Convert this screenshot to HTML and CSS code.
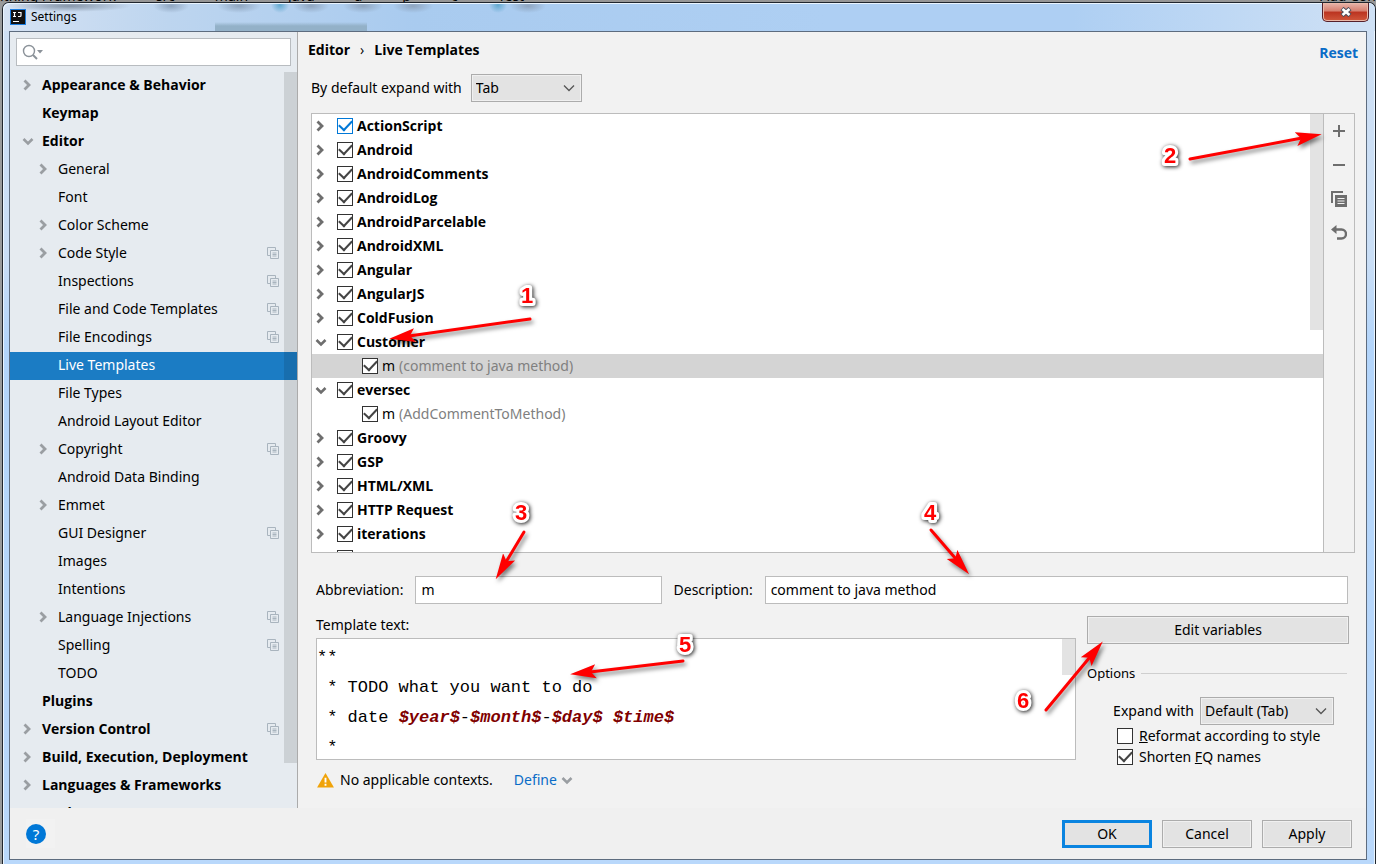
FILE: index.html
```html
<!DOCTYPE html>
<html lang="en">
<head>
<meta charset="utf-8">
<title>Settings</title>
<link rel="stylesheet" href="styles.css">
</head>
<body>
<svg class="sprite" aria-hidden="true">
  <symbol id="right" viewBox="0 0 12 12"><path d="M2.500 1.500 7 6l-4.500 4.500" fill="none" stroke="currentColor" stroke-width="2.800"/></symbol>
  <symbol id="down" viewBox="0 0 12 12"><path d="M1.500 4 6 8.500 10.500 4" fill="none" stroke="currentColor" stroke-width="2.600"/></symbol>
  <symbol id="thin" viewBox="0 0 12 12"><path d="M1 3.500 6 8.500l5-5" fill="none" stroke="currentColor" stroke-width="1.300"/></symbol>
  <symbol id="proj" viewBox="0 0 12 12"><path d="M8.500 3V.5h-8v8H3M3.500 3.500h8v8h-8zM5.500 6h4M5.500 7.500h4M5.500 9h4" fill="none" stroke="currentColor"/></symbol>
  <marker id="head" viewBox="0 0 26 16" markerWidth="26" markerHeight="16" refX="6" refY="8" orient="auto" markerUnits="userSpaceOnUse"><path d="M0 1 26 8 0 15 5 8z" fill="#f00"/></marker>
</svg>
<div class="desktop" aria-hidden="true"><span>ithing Framework</span><span>src</span><span>main</span><span>java</span><span>a</span><span>p</span><span>c</span><span>Test</span><span class="far">Add Con</span></div>
<div class="window">
  <header class="titlebar">
    <svg class="logo" viewBox="0 0 16 16"><rect width="16" height="16" fill="#1b7de0"/><rect x="1" y="1" width="14" height="14" fill="#111"/><path d="M3 3.500h3M4.500 3.500v4M3 7.500h3M8 3.500h3v3q0 1-1 1H8M3 12.500h6" fill="none" stroke="#fff" stroke-width="1.200"/></svg>
    <h1>Settings</h1>
    <button class="close" aria-label="Close"><svg viewBox="0 0 12 10"><path d="M2 1.500 10 8.500M10 1.500 2 8.500" stroke="#4b4f5c" stroke-width="4.500"/><path d="M2.500 2 9.500 8M9.500 2 2.500 8" stroke="#fff" stroke-width="2.600"/></svg></button>
  </header>
  <div class="client">
    <div class="body">
      <nav class="sidebar">
        <div class="search"><svg viewBox="0 0 22 16"><circle cx="7" cy="7" r="5.500" fill="none" stroke="#8b9299" stroke-width="1.400"/><path d="m11 11 4 4" stroke="#8b9299" stroke-width="2"/><path d="M15 6h6l-3 3.500z" fill="#8b9299"/></svg><input type="search" aria-label="Search settings"></div>
        <div class="treebox">
        <ul class="tree">
          <li class="top"><svg><use href="#right"/></svg><span>Appearance &amp; Behavior</span></li>
          <li class="top"><i></i><span>Keymap</span></li>
          <li class="top"><svg><use href="#down"/></svg><span>Editor</span></li>
          <li><svg><use href="#right"/></svg><span>General</span></li>
          <li><i></i><span>Font</span></li>
          <li><svg><use href="#right"/></svg><span>Color Scheme</span></li>
          <li><svg><use href="#right"/></svg><span>Code Style</span><svg class="proj"><use href="#proj"/></svg></li>
          <li><i></i><span>Inspections</span><svg class="proj"><use href="#proj"/></svg></li>
          <li><i></i><span>File and Code Templates</span><svg class="proj"><use href="#proj"/></svg></li>
          <li><i></i><span>File Encodings</span><svg class="proj"><use href="#proj"/></svg></li>
          <li class="selected"><i></i><span>Live Templates</span></li>
          <li><i></i><span>File Types</span></li>
          <li><i></i><span>Android Layout Editor</span></li>
          <li><svg><use href="#right"/></svg><span>Copyright</span><svg class="proj"><use href="#proj"/></svg></li>
          <li><i></i><span>Android Data Binding</span></li>
          <li><svg><use href="#right"/></svg><span>Emmet</span></li>
          <li><i></i><span>GUI Designer</span><svg class="proj"><use href="#proj"/></svg></li>
          <li><i></i><span>Images</span></li>
          <li><i></i><span>Intentions</span></li>
          <li><svg><use href="#right"/></svg><span>Language Injections</span><svg class="proj"><use href="#proj"/></svg></li>
          <li><i></i><span>Spelling</span><svg class="proj"><use href="#proj"/></svg></li>
          <li><i></i><span>TODO</span></li>
          <li class="top"><i></i><span>Plugins</span></li>
          <li class="top"><svg><use href="#right"/></svg><span>Version Control</span><svg class="proj"><use href="#proj"/></svg></li>
          <li class="top"><svg><use href="#right"/></svg><span>Build, Execution, Deployment</span></li>
          <li class="top"><svg><use href="#right"/></svg><span>Languages &amp; Frameworks</span></li>
          <li class="top"><i></i><span>Tools</span></li>
        </ul>
        <div class="thumb"></div>
        </div>
      </nav>
      <main class="page">
        <div class="crumbs"><h2>Editor</h2><span>›</span><h2>Live Templates</h2><a href="#reset">Reset</a></div>
        <div class="expand"><label for="expand">By default expand with</label>
          <span class="combo tab"><select id="expand"><option>Tab</option></select><svg><use href="#thin"/></svg></span></div>
        <section class="templates">
          <div class="list">
            <ul>
              <li><svg><use href="#right"/></svg><label><input type="checkbox" class="focus" checked>ActionScript</label></li>
              <li><svg><use href="#right"/></svg><label><input type="checkbox" checked>Android</label></li>
              <li><svg><use href="#right"/></svg><label><input type="checkbox" checked>AndroidComments</label></li>
              <li><svg><use href="#right"/></svg><label><input type="checkbox" checked>AndroidLog</label></li>
              <li><svg><use href="#right"/></svg><label><input type="checkbox" checked>AndroidParcelable</label></li>
              <li><svg><use href="#right"/></svg><label><input type="checkbox" checked>AndroidXML</label></li>
              <li><svg><use href="#right"/></svg><label><input type="checkbox" checked>Angular</label></li>
              <li><svg><use href="#right"/></svg><label><input type="checkbox" checked>AngularJS</label></li>
              <li><svg><use href="#right"/></svg><label><input type="checkbox" checked>ColdFusion</label></li>
              <li><svg><use href="#down"/></svg><label><input type="checkbox" checked>Customer</label></li>
              <li class="leaf current"><label><input type="checkbox" checked>m <em>(comment to java method)</em></label></li>
              <li><svg><use href="#down"/></svg><label><input type="checkbox" checked>eversec</label></li>
              <li class="leaf"><label><input type="checkbox" checked>m <em>(AddCommentToMethod)</em></label></li>
              <li><svg><use href="#right"/></svg><label><input type="checkbox" checked>Groovy</label></li>
              <li><svg><use href="#right"/></svg><label><input type="checkbox" checked>GSP</label></li>
              <li><svg><use href="#right"/></svg><label><input type="checkbox" checked>HTML/XML</label></li>
              <li><svg><use href="#right"/></svg><label><input type="checkbox" checked>HTTP Request</label></li>
              <li><svg><use href="#right"/></svg><label><input type="checkbox" checked>iterations</label></li>
              <li><i></i><label><input type="checkbox" aria-label="Next group" checked></label></li>
            </ul>
            <div class="thumb"></div>
          </div>
          <div class="tools">
            <button aria-label="Add"><svg viewBox="0 0 16 16"><path d="M8 2v12M2 8h12" stroke="#6e6e6e" stroke-width="2"/></svg></button>
            <button aria-label="Remove"><svg viewBox="0 0 16 16"><path d="M2 8h12" stroke="#6e6e6e" stroke-width="2"/></svg></button>
            <button aria-label="Duplicate"><svg viewBox="0 0 16 16"><path d="M1 12V1h11" fill="none" stroke="#6e6e6e" stroke-width="2"/><path d="M4 4h12v12H4z" fill="#6e6e6e"/><path d="M6.500 7.500h7M6.500 10h7M6.500 12.500h7" stroke="#f2f2f2"/></svg></button>
            <button aria-label="Restore defaults"><svg viewBox="0 0 16 16"><path d="M4 4.500h6.500a4.500 4.500 0 0 1 0 9H6" fill="none" stroke="#6e6e6e" stroke-width="2.400"/><path d="M0 4.500 5.500 0v9z" fill="#6e6e6e"/></svg></button>
          </div>
        </section>
        <div class="fields"><label for="abbr">Abbreviation:</label><input id="abbr" type="text" value="m"><label for="desc">Description:</label><input id="desc" type="text" value="comment to java method"></div>
        <div class="details">
          <section class="source">
            <h3 id="tt">Template text:</h3>
            <div class="editor">
              <pre contenteditable="true" spellcheck="false" role="textbox" aria-multiline="true" aria-labelledby="tt">**
 * TODO what you want to do
 * date <b>$year$</b>-<b>$month$</b>-<b>$day$</b> <b>$time$</b>
 *</pre>
              <div class="thumb"></div>
            </div>
            <div class="context"><svg viewBox="0 0 18 16"><path d="M9 0 18 15.500H0z" fill="#f0a30a"/><path d="M9 5v5M9 11.500v2" stroke="#fff" stroke-width="2"/></svg><span>No applicable contexts.</span><a href="#define">Define<svg class="mini"><use href="#down"/></svg></a></div>
          </section>
          <aside class="options">
            <button class="btn">Edit variables</button>
            <h3><span>Options</span></h3>
            <div class="with"><label for="with">Expand with</label><span class="combo"><select id="with"><option>Default (Tab)</option></select><svg><use href="#thin"/></svg></span></div>
            <label class="check"><input type="checkbox"><span><u>R</u>eformat according to style</span></label>
            <label class="check"><input type="checkbox" checked><span>Shorten <u>F</u>Q names</span></label>
          </aside>
        </div>
      </main>
    </div>
    <footer><button class="help" aria-label="Help"><span>?</span></button><button class="btn ok">OK</button><button class="btn">Cancel</button><button class="btn">Apply</button></footer>
  </div>
</div>
<svg class="notes" viewBox="0 0 1376 864">
  <g stroke="#f00" stroke-width="3" stroke-linecap="round">
    <path d="M530 319 409 336" marker-end="url(#head)"/>
    <path d="M1190 159 1302 138" marker-end="url(#head)"/>
    <path d="M524 532 506 562" marker-end="url(#head)"/>
    <path d="M931 530 956 559" marker-end="url(#head)"/>
    <path d="M683 661 590 672" marker-end="url(#head)"/>
    <path d="M1046 710 1090 657" marker-end="url(#head)"/>
  </g>
  <g class="numbers">
    <text x="527" y="303">1</text><text x="1170" y="163">2</text><text x="521" y="520">3</text>
    <text x="930" y="520">4</text><text x="685" y="652">5</text><text x="1023" y="708">6</text>
  </g>
</svg>
</body>
</html>
```
FILE: styles.css
```css
* { box-sizing: border-box; }
body {
  margin: 0;
  height: 100vh;
  overflow: hidden;
  display: flex;
  flex-direction: column;
  background: #999b9c;
  font: 14px/20px "Noto Sans", "Open Sans", sans-serif;
  color: #000;
}
input, select, button { font: inherit; color: inherit; margin: 0; }
h1, h2, h3, ul, pre { margin: 0; padding: 0; font: inherit; }
ul { list-style: none; }
a { color: #0a6cc7; text-decoration: none; }
svg { flex: none; display: block; width: 12px; height: 12px; }
.sprite { position: absolute; width: 0; height: 0; }

.desktop {
  height: 2px;
  overflow: hidden;
  display: flex;
  align-items: flex-end;
  gap: 40px;
  line-height: 12px;
  background: #969696;
}
.desktop .far { margin-left: auto; }

.window {
  flex: 1;
  min-height: 0;
  margin-left: 2px;
  padding: 0 8px 4px 6px;
  display: flex;
  flex-direction: column;
  border: 1px solid #20262e;
  border-bottom: 0;
  border-radius: 7px 7px 0 0;
  background: linear-gradient(#cfe0f4, #c9def6 30%, #b3d5fb 40%, #b9d8fb);
  box-shadow: inset 1px 1px 0 #eaf5ff, inset -1px 0 0 #eaf5ff;
}
.titlebar {
  height: 28px;
  flex: none;
  display: flex;
  align-items: center;
  gap: 5px;
  margin: 0 -8px 0 -6px;
  padding: 0 6px 0 7px;
  border-radius: 6px 6px 0 0;
  box-shadow: inset 1px 1px 0 #eaf5ff;
  background:
    radial-gradient(ellipse 9px 8px at 277px 2px, #62a9cf, transparent),
    radial-gradient(ellipse 9px 8px at 495px 2px, #62a9cf, transparent),
    radial-gradient(ellipse 62px 6px at 66px 3px, #8695a8, transparent),
    radial-gradient(ellipse 18px 7px at 168px 3px, #8fa5bf, transparent),
    radial-gradient(ellipse 22px 7px at 236px 3px, #8fa5bf, transparent),
    radial-gradient(ellipse 18px 7px at 308px 3px, #8fa5bf, transparent),
    radial-gradient(ellipse 20px 7px at 360px 3px, #8fa5bf, transparent),
    radial-gradient(ellipse 20px 7px at 410px 3px, #8fa5bf, transparent),
    radial-gradient(ellipse 18px 7px at 525px 3px, #8fa5bf, transparent),
    linear-gradient(transparent, #93b1c8 4px) 212px 19px / 152px 9px no-repeat,
    linear-gradient(90deg, #d5e2f3, #bdd5ef 12%, #a9cbef 30%, #aecff3 60%, #aecff3 78%, #cfe1f5);
}
.titlebar h1 { font-size: 12px; }
.logo { width: 16px; height: 16px; }
.close {
  margin-left: auto;
  align-self: flex-start;
  width: 47px;
  height: 19px;
  padding: 0;
  display: grid;
  place-items: center;
  border: 1px solid #55202a;
  border-top: 0;
  border-radius: 0 0 5px 5px;
  background: linear-gradient(#e8b6ac, #d67d6d 45%, #bb3320 50%, #d0583c);
  box-shadow: inset 0 0 0 1px #eab8a8;
}
.close svg { width: 12px; height: 10px; }

.client {
  flex: 1;
  min-height: 0;
  display: flex;
  flex-direction: column;
  border: 1px solid #5d6c7f;
  background: #f2f2f2;
}
.body { flex: 1; min-height: 0; display: flex; }
.thumb { position: absolute; top: 0; right: 0; width: 13px; background: rgba(0, 0, 0, .11); }

.sidebar {
  flex: none;
  width: 288px;
  display: flex;
  flex-direction: column;
  border-right: 1px solid #ababab;
  background: #e6ebf0;
}
.search {
  margin: 6px;
  height: 28px;
  flex: none;
  display: flex;
  align-items: center;
  padding-left: 5px;
  border: 1px solid #b8bcc0;
  background: #fff;
}
.search svg { width: 22px; height: 16px; }
.search input { flex: 1; min-width: 0; border: 0; outline: 0; background: none; }
.treebox { position: relative; flex: 1; min-height: 0; overflow: hidden; }
.treebox .thumb { height: 691px; }
.tree li {
  height: 28px;
  display: flex;
  align-items: center;
  gap: 8px;
  padding: 0 18px 2px 28px;
  white-space: nowrap;
}
.tree .top { padding-left: 12px; font-weight: 700; }
.tree .top, .list li, .crumbs { font-family: "Open Sans", "Noto Sans", sans-serif; }
.tree svg { color: #9a9ea2; }
.tree i, .list i { width: 12px; flex: none; }
.tree .proj { margin-left: auto; color: #a9b4be; }
.tree .selected { background: #1b7cc4; color: #fff; }

.page { flex: 1; min-width: 0; display: flex; flex-direction: column; padding: 0 11px 0 13px; }
.crumbs { display: flex; gap: 10px; padding-top: 8px; margin: 0 -3px; font-weight: 700; }
.crumbs span { font-weight: 400; }
.crumbs a { margin-left: auto; padding-top: 3px; }
.expand { display: flex; align-items: center; gap: 9px; margin: 11px 0; }
.combo { position: relative; display: block; width: 134px; }
.combo.tab { width: 111px; }
.combo select {
  appearance: none;
  display: block;
  width: 100%;
  height: 28px;
  padding: 0 4px;
  border: 1px solid #acacac;
  border-radius: 0;
  background: #e3e3e3;
  box-shadow: inset 0 0 0 1px #f0f0f0;
}
.combo svg { position: absolute; right: 7px; top: 8px; color: #555; pointer-events: none; }

.templates { flex: 1; min-height: 0; display: flex; border: 1px solid #bcbcbc; }
.list { position: relative; flex: 1; min-width: 0; overflow: hidden; background: #fff; }
.list li {
  height: 24px;
  display: flex;
  align-items: center;
  gap: 10px;
  padding-left: 3px;
  font-weight: 700;
}
.list li svg { color: #6e6e6e; }
.list label { display: flex; align-items: center; gap: 4px; }
.list .leaf { padding-left: 50px; font-weight: 400; font-family: "Noto Sans", sans-serif; }
.list em { font-style: normal; color: #808080; }
.list .current { background: #d4d4d4; }
.list .thumb { height: 216px; }
.tools {
  width: 31px;
  flex: none;
  display: flex;
  flex-direction: column;
  align-items: center;
  gap: 18px;
  padding-top: 9px;
  border-left: 1px solid #bcbcbc;
}
.tools button { padding: 0; border: 0; background: none; }
.tools svg { width: 16px; height: 16px; }

input[type="checkbox"] {
  appearance: none;
  flex: none;
  width: 16px;
  height: 16px;
  display: grid;
  place-items: center;
  border: 1px solid #333;
  background: #fff;
}
input[type="checkbox"]:checked::after {
  content: "";
  width: 11px;
  height: 6px;
  margin-bottom: 4px;
  border: solid #444;
  border-width: 0 0 2px 2px;
  transform: rotate(-47deg);
}
input.focus, input.focus:checked::after { border-color: #0078d7 !important; }

.fields { display: flex; align-items: center; margin: 23px 7px 12px 5px; gap: 12px; }
.fields input {
  flex: 571;
  min-width: 0;
  height: 28px;
  padding: 0 5px 2px;
  border: 1px solid #bcbcbc;
  background: #fff;
}
.fields #abbr { flex: 234; }
.details { display: flex; gap: 11px; margin: 0 6px 0 5px; }
.source { flex: 1; min-width: 0; }
.source h3 { line-height: 18px; margin-bottom: 4px; }
.editor { position: relative; border: 1px solid #bcbcbc; background: #fff; }
.editor .thumb { height: 36px; }
.editor pre {
  padding: 4px 0 0;
  outline: 0;
  height: 120px;
  overflow: hidden;
  font: 17px/30px "Liberation Mono", monospace;
}
.editor b { color: #800000; font-style: italic; }
.context { display: flex; align-items: center; gap: 6px; padding: 10px 1px 18px; }
.context > svg { width: 17px; height: 15px; }
.context a { display: flex; align-items: center; gap: 4px; margin-left: 15px; }
.mini { color: #9a9ea2; }
.options { width: 262px; flex: none; }
.btn {
  height: 28px;
  padding: 0;
  border: 1px solid #acacac;
  background: #e3e3e3;
  box-shadow: inset 0 0 0 1px #f0f0f0;
}
.options .btn { width: 100%; }
.options h3 { display: flex; align-items: center; gap: 6px; margin: 19px 2px 14px 0; font-size: 13px; }
.options h3::after { content: ""; flex: 1; height: 1px; background: #cfcfcf; }
.with { display: flex; align-items: center; justify-content: flex-end; gap: 6px; margin: 0 15px 0 0; }
.check { display: flex; align-items: center; gap: 6px; height: 21px; padding-left: 30px; }

footer {
  flex: none;
  height: 51px;
  display: flex;
  align-items: center;
  gap: 10px;
  padding: 0 14px 0 16px;
  background: #f0f0f0;
}
footer .btn { width: 90px; }
footer .ok { border: 3px solid #0a84e0; box-shadow: none; }
.help { margin-right: auto; padding: 0; border: 0; width: 29px; height: 29px; background: #f2f2f2; }
.help span { display: block; width: 20px; border-radius: 50%; background: #0078d7; color: #fff; font-size: 15px; }

.notes { position: absolute; left: 0; top: 0; width: 1376px; height: 864px; pointer-events: none; }
.notes g { filter: drop-shadow(2px 3px 2px rgba(0, 0, 0, .5)); }
.notes .numbers { filter: drop-shadow(1px 1px 2px rgba(0, 0, 0, .9)); }
.numbers {
  font: 700 22px "Liberation Sans", sans-serif;
  text-anchor: middle;
  fill: #f00;
  stroke: #fff;
  stroke-width: 6px;
  stroke-linejoin: round;
  paint-order: stroke;
}
```
